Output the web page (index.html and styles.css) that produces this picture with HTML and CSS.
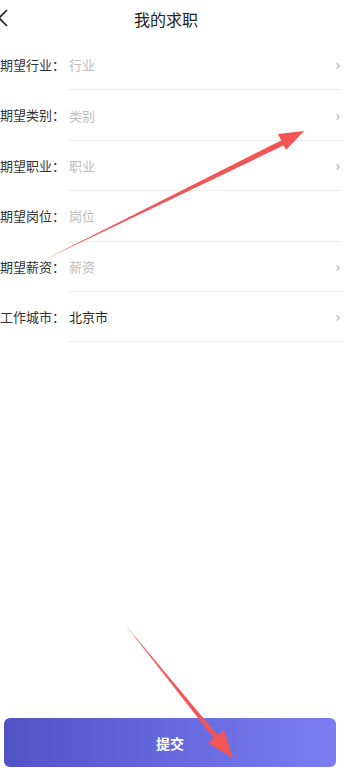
FILE: index.html
```html
<!DOCTYPE html>
<html lang="zh-CN">
<head>
    <meta charset="UTF-8">
    <meta name="viewport" content="width=device-width, initial-scale=1.0">
    <title>我的求职</title>
    <link rel="stylesheet" href="styles.css">
</head>
<body>
    <div class="page">
        <div class="header">
            <svg class="back" width="12" height="20" viewBox="0 0 12 20">
                <polyline points="7,2 -1,10 7,18" fill="none" stroke="#222" stroke-width="1.6"/>
            </svg>
            <h1>我的求职</h1>
        </div>

        <div class="form">
            <div class="row">
                <span class="label">期望行业：</span>
                <div class="field"><span class="value empty">行业</span><span class="arrow">&#8250;</span></div>
            </div>
            <div class="row">
                <span class="label">期望类别：</span>
                <div class="field"><span class="value empty">类别</span><span class="arrow">&#8250;</span></div>
            </div>
            <div class="row">
                <span class="label">期望职业：</span>
                <div class="field"><span class="value empty">职业</span><span class="arrow">&#8250;</span></div>
            </div>
            <div class="row">
                <span class="label">期望岗位：</span>
                <div class="field"><span class="value empty">岗位</span></div>
            </div>
            <div class="row">
                <span class="label">期望薪资：</span>
                <div class="field"><span class="value empty">薪资</span><span class="arrow">&#8250;</span></div>
            </div>
            <div class="row">
                <span class="label">工作城市：</span>
                <div class="field"><span class="value">北京市</span><span class="arrow">&#8250;</span></div>
            </div>
        </div>

        <div class="footer">
            <button class="submit">提交</button>
        </div>

        <!-- annotation arrows drawn over the screenshot -->
        <svg class="marks" width="348" height="774" viewBox="0 0 348 774">
            <polygon points="43,260.5 282,140 284.5,145" fill="#f25555"/>
            <polygon points="304,131 278,134 286,150" fill="#f25555"/>
            <polygon points="125.5,625 214,738.5 217.5,735" fill="#f25555"/>
            <polygon points="233,758 208,743 224,730" fill="#f25555"/>
        </svg>
    </div>
</body>
</html>
```

FILE: styles.css
```css
body {
    margin: 0;
    padding: 0;
    background: #fff;
    font-family: "Noto Sans CJK SC", "Noto Sans", sans-serif;
    color: #333;
}

.page {
    position: relative;
    width: 348px;
    height: 774px;
    display: flex;
    flex-direction: column;
    overflow: hidden;
}

.header {
    position: relative;
    height: 38px;
    display: flex;
    align-items: center;
    justify-content: center;
}

.back {
    position: absolute;
    left: 0;
    top: 8px;
}

.header h1 {
    margin: 0;
    font-size: 16px;
    font-weight: normal;
    color: #222;
    padding-right: 16px;
}

.form {
    padding-top: 2px;
}

.row {
    display: flex;
    height: 50.4px;
}

.label {
    width: 68px;
    flex: none;
    font-size: 13px;
    line-height: 50px;
    color: #333;
}

.field {
    flex: 1;
    margin-right: 6px;
    display: flex;
    align-items: center;
    justify-content: space-between;
    border-bottom: 1px solid #eeeeee;
}

.value {
    font-size: 13px;
    color: #222;
    padding-left: 1px;
}

.value.empty {
    color: #bdbdbd;
}

.arrow {
    font-size: 15px;
    color: #aaa;
    margin-right: 2px;
    margin-top: -2px;
}

.footer {
    margin-top: auto;
    padding: 0 12px 7px 4px;
}

.submit {
    width: 100%;
    height: 49px;
    border: none;
    border-radius: 6px;
    background: linear-gradient(90deg, #5152c6, #7b7ef3);
    color: #fff;
    font-family: "Noto Sans CJK SC", sans-serif;
    font-size: 14px;
    font-weight: bold;
    padding-right: 6px;
}

.marks {
    position: absolute;
    left: 0;
    top: 0;
    pointer-events: none;
}
```
